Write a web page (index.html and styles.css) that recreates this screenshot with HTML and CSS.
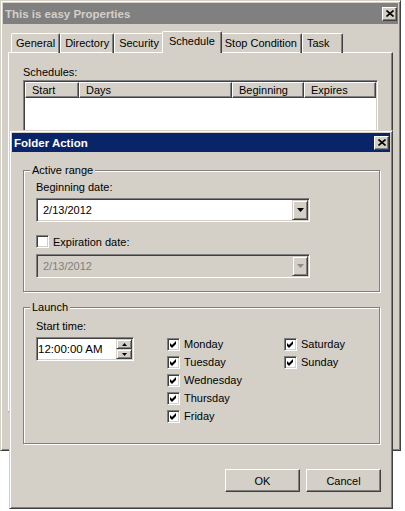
FILE: index.html
```html
<!DOCTYPE html>
<html lang="en">
  <head>
    <meta charset="UTF-8">
    <title>This is easy Properties</title>
    <link rel="stylesheet" href="styles.css">
  </head>
  <body>
    <!-- window behind -->
    <div class="window props">
      <div class="titlebar inactive">
        <span class="title">This is easy Properties</span>
        <span class="close-btn">
          <svg width="8" height="7" viewBox="0 0 8 7"><path d="M0.5 0.5 L7.5 6.5 M7.5 0.5 L0.5 6.5" stroke="#000" stroke-width="1.6"/></svg>
        </span>
      </div>
      <div class="tabs">
        <div class="tab">General</div>
        <div class="tab">Directory</div>
        <div class="tab">Security</div>
        <div class="tab active">Schedule</div>
        <div class="tab">Stop Condition</div>
        <div class="tab last">Task</div>
      </div>
      <div class="tab-page">
        <div class="label">Schedules:</div>
        <div class="listview">
          <div class="list-header">
            <div class="col">Start</div>
            <div class="col">Days</div>
            <div class="col">Beginning</div>
            <div class="col">Expires</div>
          </div>
        </div>
      </div>
    </div>

    <!-- dialog on top -->
    <div class="window dialog">
      <div class="titlebar">
        <span class="title">Folder Action</span>
        <span class="close-btn">
          <svg width="8" height="7" viewBox="0 0 8 7"><path d="M0.5 0.5 L7.5 6.5 M7.5 0.5 L0.5 6.5" stroke="#000" stroke-width="1.6"/></svg>
        </span>
      </div>

      <fieldset class="group">
        <legend>Active range</legend>
        <div class="label">Beginning date:</div>
        <div class="combo">
          <span class="combo-text">2/13/2012</span>
          <span class="drop-btn"><svg width="7" height="4" viewBox="0 0 7 4"><path d="M0 0 H7 L3.5 4 Z" fill="#000"/></svg></span>
        </div>
        <div class="check expire">
          <span class="box"></span>
          <span>Expiration date:</span>
        </div>
        <div class="combo disabled">
          <span class="combo-text">2/13/2012</span>
          <span class="drop-btn"><svg width="7" height="4" viewBox="0 0 7 4"><path d="M0 0 H7 L3.5 4 Z" fill="#8c8c8c"/></svg></span>
        </div>
      </fieldset>

      <fieldset class="group launch">
        <legend>Launch</legend>
        <div class="launch-row">
          <div class="time-col">
            <div class="label">Start time:</div>
            <div class="spinner">
              <span class="spin-text">12:00:00 AM</span>
              <span class="spin">
                <span class="spin-btn"><svg width="5" height="3" viewBox="0 0 5 3"><path d="M2.5 0 L5 3 H0 Z" fill="#000"/></svg></span>
                <span class="spin-btn"><svg width="5" height="3" viewBox="0 0 5 3"><path d="M0 0 H5 L2.5 3 Z" fill="#000"/></svg></span>
              </span>
            </div>
          </div>
          <div class="days">
            <div class="check"><span class="box"><svg width="7" height="7" viewBox="0 0 7 7"><path d="M0 2 L2 4 L6 0 V3 L2 7 L0 5 Z" fill="#000"/></svg></span><span>Monday</span></div>
            <div class="check"><span class="box"><svg width="7" height="7" viewBox="0 0 7 7"><path d="M0 2 L2 4 L6 0 V3 L2 7 L0 5 Z" fill="#000"/></svg></span><span>Tuesday</span></div>
            <div class="check"><span class="box"><svg width="7" height="7" viewBox="0 0 7 7"><path d="M0 2 L2 4 L6 0 V3 L2 7 L0 5 Z" fill="#000"/></svg></span><span>Wednesday</span></div>
            <div class="check"><span class="box"><svg width="7" height="7" viewBox="0 0 7 7"><path d="M0 2 L2 4 L6 0 V3 L2 7 L0 5 Z" fill="#000"/></svg></span><span>Thursday</span></div>
            <div class="check"><span class="box"><svg width="7" height="7" viewBox="0 0 7 7"><path d="M0 2 L2 4 L6 0 V3 L2 7 L0 5 Z" fill="#000"/></svg></span><span>Friday</span></div>
            <div class="check"><span class="box"><svg width="7" height="7" viewBox="0 0 7 7"><path d="M0 2 L2 4 L6 0 V3 L2 7 L0 5 Z" fill="#000"/></svg></span><span>Saturday</span></div>
            <div class="check"><span class="box"><svg width="7" height="7" viewBox="0 0 7 7"><path d="M0 2 L2 4 L6 0 V3 L2 7 L0 5 Z" fill="#000"/></svg></span><span>Sunday</span></div>
          </div>
        </div>
      </fieldset>

      <div class="buttons">
        <button class="btn">OK</button>
        <button class="btn">Cancel</button>
      </div>
    </div>
  </body>
</html>
```

FILE: styles.css
```css
body {
    margin: 0;
    background: #fff;
    font-family: "Liberation Sans", Arial, sans-serif;
    font-size: 11px;
    color: #000;
}
.window {
    position: absolute;
    box-sizing: border-box;
    display: flex;
    flex-direction: column;
    background: #d4d0c8;
    border: 1px solid;
    border-color: #d4d0c8 #404040 #404040 #d4d0c8;
    box-shadow: inset 1px 1px 0 #fff, inset -1px -1px 0 #808080;
    padding: 2px;
}
.props {
    left: 0;
    top: 0;
    width: 401px;
    height: 451px;
}
.dialog {
    left: 9px;
    top: 130px;
    width: 384px;
    height: 379px;
}
.titlebar {
    display: flex;
    align-items: center;
    justify-content: space-between;
    flex: none;
    height: 21px;
    padding: 0 1px 0 2px;
    background: #0a246a;
    color: #fff;
    font-weight: bold;
    font-size: 11.5px;
}
.titlebar.inactive {
    background: #808080;
    color: #d4d0c8;
}
.dialog .titlebar {
    height: 19px;
}
.close-btn {
    display: flex;
    align-items: center;
    justify-content: center;
    width: 15px;
    height: 14px;
    box-sizing: border-box;
    background: #d4d0c8;
    border: 1px solid;
    border-color: #fff #404040 #404040 #fff;
    box-shadow: inset -1px -1px 0 #808080;
}

/* tabs */
.tabs {
    display: flex;
    align-items: flex-end;
    flex: none;
    height: 22px;
    margin-top: 7px;
    margin-bottom: -1px;
    padding-left: 8px;
    position: relative;
    z-index: 1;
}
.tab {
    height: 20px;
    line-height: 18px;
    box-sizing: border-box;
    padding: 0 4px;
    border: 1px solid;
    border-bottom: none;
    border-color: #fff #404040 transparent #fff;
    box-shadow: inset -1px 0 0 #808080;
    border-radius: 2px 2px 0 0;
}
.tab.active {
    height: 22px;
    line-height: 19px;
    margin: 0 -2px;
    padding: 0 6px;
    background: #d4d0c8;
    position: relative;
    z-index: 2;
}
.tab.last {
    padding-right: 12px;
}
.tab-page {
    flex: none;
    height: 360px;
    box-sizing: border-box;
    margin: 0 5px;
    padding: 12px 13px 0 14px;
    border: 1px solid;
    border-color: #fff #404040 #404040 #fff;
    box-shadow: inset -1px -1px 0 #808080;
}
.label {
    line-height: 14px;
}
.listview {
    margin-top: 1px;
    width: 355px;
    height: 240px;
    box-sizing: border-box;
    padding: 1px;
    background: #fff;
    border: 1px solid;
    border-color: #808080 #fff #fff #808080;
    box-shadow: inset 1px 1px 0 #404040, inset -1px -1px 0 #d4d0c8;
}
.list-header {
    display: grid;
    grid-template-columns: 54px 153px 72px 72px;
    height: 16px;
}
.col {
    box-sizing: border-box;
    padding-left: 6px;
    line-height: 14px;
    background: #d4d0c8;
    border: 1px solid;
    border-color: #fff #404040 #404040 #fff;
    box-shadow: inset -1px -1px 0 #808080;
}

/* dialog */
.group {
    margin: 12px 10px 0 11px;
    padding: 3px 12px 13px;
    min-width: 0;
    border: 1px solid #808080;
    box-shadow: 1px 1px 0 #fff, inset 1px 1px 0 #fff;
}
.group legend {
    margin-left: -6px;
    padding: 0 2px;
    line-height: 13px;
    background: #d4d0c8;
}
.group.launch {
    margin-top: 9px;
    padding-top: 5px;
    padding-bottom: 18px;
}
.combo {
    display: flex;
    width: 274px;
    height: 24px;
    margin-top: 4px;
    box-sizing: border-box;
    padding: 1px;
    background: #fff;
    border: 1px solid;
    border-color: #808080 #fff #fff #808080;
    box-shadow: inset 1px 1px 0 #404040, inset -1px -1px 0 #d4d0c8;
}
.combo-text {
    flex: 1;
    padding-left: 5px;
    line-height: 20px;
}
.drop-btn {
    display: flex;
    align-items: center;
    justify-content: center;
    width: 16px;
    box-sizing: border-box;
    background: #d4d0c8;
    border: 1px solid;
    border-color: #d4d0c8 #404040 #404040 #d4d0c8;
    box-shadow: inset 1px 1px 0 #fff, inset -1px -1px 0 #808080;
}
.combo.disabled {
    margin-top: 6px;
    background: #d4d0c8;
    color: #808080;
}
.check {
    display: flex;
    align-items: center;
    gap: 4px;
    height: 18px;
}
.check.expire {
    height: 13px;
    margin-top: 13px;
}
.box {
    display: flex;
    align-items: center;
    justify-content: center;
    width: 13px;
    height: 13px;
    box-sizing: border-box;
    background: #fff;
    border: 1px solid;
    border-color: #808080 #fff #fff #808080;
    box-shadow: inset 1px 1px 0 #404040, inset -1px -1px 0 #d4d0c8;
}
.launch-row {
    display: flex;
}
.time-col {
    width: 98px;
}
.spinner {
    display: flex;
    height: 24px;
    margin-top: 4px;
    box-sizing: border-box;
    padding: 1px;
    background: #fff;
    border: 1px solid;
    border-color: #808080 #fff #fff #808080;
    box-shadow: inset 1px 1px 0 #404040, inset -1px -1px 0 #d4d0c8;
}
.spin-text {
    flex: 1;
    line-height: 20px;
    font-size: 11.5px;
}
.spin {
    display: flex;
    flex-direction: column;
    width: 16px;
}
.spin-btn {
    flex: 1;
    display: flex;
    align-items: center;
    justify-content: center;
    box-sizing: border-box;
    background: #d4d0c8;
    border: 1px solid;
    border-color: #d4d0c8 #404040 #404040 #d4d0c8;
    box-shadow: inset 1px 1px 0 #fff, inset -1px -1px 0 #808080;
}
.days {
    display: grid;
    grid-auto-flow: column;
    grid-template-rows: repeat(5, 18px);
    grid-template-columns: 117px auto;
    margin: 16px 0 0 33px;
}
.buttons {
    display: flex;
    justify-content: flex-end;
    gap: 6px;
    margin: 25px 9px 0 0;
}
.btn {
    width: 75px;
    height: 23px;
    box-sizing: border-box;
    padding: 0;
    font: inherit;
    color: #000;
    background: #d4d0c8;
    border: 1px solid;
    border-color: #fff #404040 #404040 #fff;
    box-shadow: inset -1px -1px 0 #808080;
}
```
